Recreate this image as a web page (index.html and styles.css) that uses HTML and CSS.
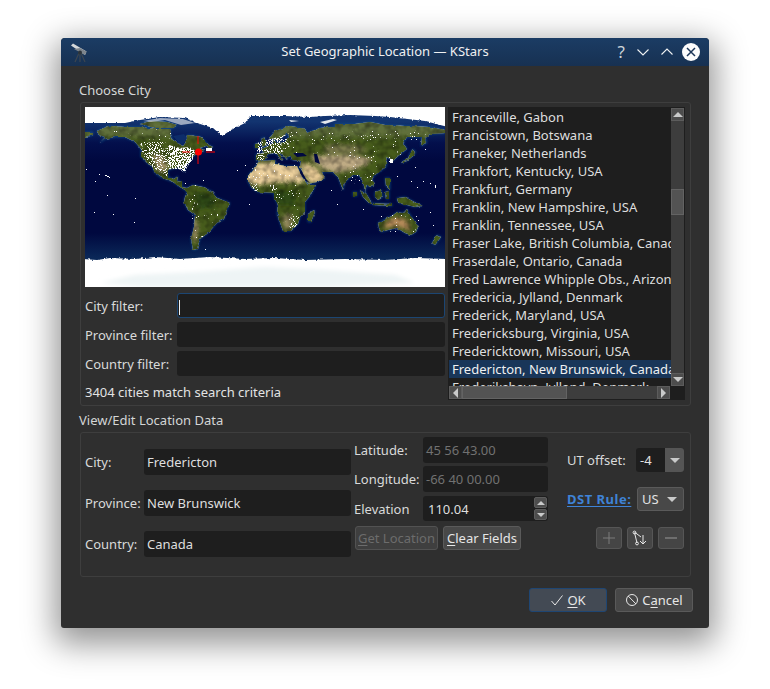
FILE: index.html
```html
<!DOCTYPE html>
<html lang="en">
<head>
<meta charset="utf-8">
<title>Set Geographic Location — KStars</title>
<link rel="stylesheet" href="styles.css">
</head>
<body>
<div class="window">
  <header class="titlebar">
    <svg class="app-icon" viewBox="0 0 18 20" width="18" height="20">
      <path d="M9 10 L5 19 M10 10 L10 19 M11 10 L15 19" stroke="#3c4650" stroke-width="1.2" fill="none"/>
      <path d="M1 2.5 L3 0.5 L16.5 8.5 L15 12 Z" fill="#d5d8da"/>
      <path d="M4 6 L15 12 L16.5 8.5 L10 5 Z" fill="#7d858c"/>
      <circle cx="10" cy="9.5" r="2" fill="#2d343a"/>
    </svg>
    <div class="title">Set Geographic Location — KStars</div>
    <div class="controls">
      <span class="help">?</span>
      <svg viewBox="0 0 14 14" width="14" height="14"><path d="M1.5 4.5 L7 10 L12.5 4.5" fill="none" stroke="#f0f2f3" stroke-width="1.1"/></svg>
      <svg viewBox="0 0 14 14" width="14" height="14"><path d="M1.5 9.5 L7 4 L12.5 9.5" fill="none" stroke="#f0f2f3" stroke-width="1.1"/></svg>
      <svg class="close" viewBox="0 0 18 18" width="18" height="18"><circle cx="9" cy="9" r="9" fill="#fcfcfc"/><path d="M5 5 L13 13 M13 5 L5 13" stroke="#1b3557" stroke-width="1.5"/></svg>
    </div>
  </header>

  <main class="content">
    <div class="section-label">Choose City</div>
    <section class="group group-city">
      <div class="city-left">
        <svg class="map" viewBox="0 0 360 180" width="360" height="180">
          <defs>
            <linearGradient id="sea" x1="0" y1="0" x2="0" y2="1">
              <stop offset="0.08" stop-color="#123470"/>
              <stop offset="0.2" stop-color="#030f4c"/>
              <stop offset="0.3" stop-color="#00083f"/>
              <stop offset="0.7" stop-color="#00083f"/>
              <stop offset="0.84" stop-color="#0a2858"/>
            </linearGradient>
            <filter id="glow"><feGaussianBlur stdDeviation="1"/></filter>
            <filter id="soft" x="-20%" y="-20%" width="140%" height="140%"><feGaussianBlur stdDeviation="2"/></filter>
            <filter id="rough" x="-2%" y="-2%" width="104%" height="104%" color-interpolation-filters="sRGB">
              <feTurbulence type="fractalNoise" baseFrequency="0.18" numOctaves="3" seed="7" result="n"/>
              <feDisplacementMap in="SourceGraphic" in2="n" scale="3" xChannelSelector="R" yChannelSelector="G" result="d"/>
              <feTurbulence type="fractalNoise" baseFrequency="0.14" numOctaves="2" seed="11"/>
              <feColorMatrix values="0.8 0 0 0 0.5  0.8 0 0 0 0.5  0.8 0 0 0 0.5  0 0 0 0 1" result="g"/>
              <feBlend in="d" in2="g" mode="multiply" result="b"/>
              <feComposite in="b" in2="d" operator="in"/>
            </filter>
            <filter id="ragged" x="-2%" y="-5%" width="104%" height="110%" color-interpolation-filters="sRGB">
              <feTurbulence type="fractalNoise" baseFrequency="0.3" numOctaves="2" seed="4" result="n"/>
              <feDisplacementMap in="SourceGraphic" in2="n" scale="3" xChannelSelector="R" yChannelSelector="G"/>
            </filter>
            <filter id="c10" x="0" y="0" width="100%" height="100%" color-interpolation-filters="sRGB">
              <feTurbulence type="fractalNoise" baseFrequency="0.95" numOctaves="1" seed="5"/>
              <feColorMatrix values="0 0 0 0 1  0 0 0 0 1  0 0 0 0 1  40 0 0 0 -28"/>
              <feComposite in2="SourceGraphic" operator="in"/>
            </filter>
            <filter id="c25" x="0" y="0" width="100%" height="100%" color-interpolation-filters="sRGB">
              <feTurbulence type="fractalNoise" baseFrequency="0.95" numOctaves="1" seed="9"/>
              <feColorMatrix values="0 0 0 0 1  0 0 0 0 1  0 0 0 0 1  40 0 0 0 -25"/>
              <feComposite in2="SourceGraphic" operator="in"/>
            </filter>
            <filter id="c50" x="0" y="0" width="100%" height="100%" color-interpolation-filters="sRGB">
              <feTurbulence type="fractalNoise" baseFrequency="0.95" numOctaves="1" seed="2"/>
              <feColorMatrix values="0 0 0 0 1  0 0 0 0 1  0 0 0 0 1  40 0 0 0 -21.5"/>
              <feComposite in2="SourceGraphic" operator="in"/>
            </filter>
            <filter id="c80" x="0" y="0" width="100%" height="100%" color-interpolation-filters="sRGB">
              <feTurbulence type="fractalNoise" baseFrequency="0.95" numOctaves="1" seed="14"/>
              <feColorMatrix values="0 0 0 0 1  0 0 0 0 1  0 0 0 0 1  40 0 0 0 -18.5"/>
              <feComposite in2="SourceGraphic" operator="in"/>
            </filter>
            <path id="land-shape" d="M12 24L24 19L40 20L55 20L70 22L85 22L86 28L88 33L94 37L98 39L101 35L102 28L110 29L116 30L124 38L115 41L120 44L114 46L110 48L105 52L104 55L99 59L100 65L98 62L96 60L90 61L83 63L83 70L89 72L93 69L92 74L97 75L97 80L102 81L100 83L95 80L88 75L75 70L70 66L67 59L63 57L56 50L56 42L50 35L40 30L30 30L20 32L15 36L20 30L14 28Z M55 17L66 14L82 15L92 18L88 21L70 21Z M100 82L102 81L108 78L118 80L128 85L130 90L145 96L141 105L139 112L132 116L123 126L115 132L112 142L108 143L106 132L109 120L110 108L103 103L99 95L100 90L102 86Z M163 75L163 69L170 60L174 54L190 53L191 57L200 59L212 59L217 70L223 78L231 78L225 89L220 95L220 105L215 110L213 117L206 124L198 124L192 107L193 98L189 90L189 86L173 85L167 81Z M171 53L171 47L179 46L176 42L183 39L188 36L188 33L191 36L200 35L203 30L202 25L198 30L193 34L185 31L190 24L205 19L220 22L222 26L235 21L250 20L250 17L270 17L285 15L300 18L320 19L345 20L360 23L360 26L345 27L340 30L342 36L336 39L337 30L322 30L318 36L322 42L312 50L308 54L306 52L300 50L302 56L301 60L290 68L287 72L289 78L285 80L282 78L280 85L284 91L282 91L278 75L274 68L268 68L260 75L258 83L253 70L247 65L237 65L239 70L240 71L232 75L223 77L219 68L215 60L216 54L207 53L206 49L203 50L202 53L199 49L193 46L198 53L196 52L190 46L183 47L180 52L174 54Z M0 25L8 25L8 28L0 30Z M170 37L174 36L174 41L170 41Z M176 32L179 30L182 38L177 40Z M293 116L300 112L307 109L312 105L318 106L322 102L324 106L328 112L333 120L331 125L326 128L320 126L312 121L303 123L296 125L294 121Z M275 83L282 88L287 96L284 96L278 90Z M287 96L307 97L307 99L288 98Z M290 85L296 83L298 90L293 93L290 90Z M300 85L304 84L304 92L301 92Z M312 91L320 90L337 99L330 100L318 97L313 95Z M300 71L305 71L305 83L301 79Z M323 52L325 46L328 42L331 45L328 49L322 54L316 56L318 54Z M223 107L229 103L230 105L226 115L223 115Z M352 128L356 130L350 138L347 136Z M120 36L128 40L124 42Z M268 85H272V89H268Z"/>
            <clipPath id="land-clip"><use href="#land-shape"/></clipPath>
          </defs>
          <rect width="360" height="180" fill="url(#sea)"/>

          <use href="#land-shape" fill="#1a6a9c" stroke="#1a6a9c" stroke-width="1" filter="url(#glow)" opacity=".5"/>

          <g filter="url(#rough)">
            <use href="#land-shape" fill="#465b1b"/>
            <g clip-path="url(#land-clip)">
              <g filter="url(#soft)">
                <rect x="0" y="14" width="360" height="16" fill="#61703a"/>
                <path d="M160 68L172 56L192 55L212 58L220 68L218 76L205 75L190 76L175 78L162 76Z" fill="#ecd09c"/>
                <path d="M215 56L228 58L240 70L234 76L224 76Z" fill="#e8ca94"/>
                <path d="M224 49L250 48L270 48L288 52L280 58L272 62L250 66L237 62Z" fill="#bfab84"/>
                <path d="M240 38L270 38L285 43L265 46L240 46Z" fill="#7f7d50"/>
                <path d="M298 121L302 114L312 110L320 112L325 119L325 124L312 119L304 121Z" fill="#b68a5a"/>
                <path d="M66 48L78 48L84 62L74 66Z" fill="#9d8f68"/>
                <path d="M107 108L113 118L112 134L108 135Z" fill="#9f8c68"/>
                <path d="M197 108L208 108L206 122L199 122Z" fill="#958a5e"/>
                <path d="M110 85L128 88L130 100L112 102Z" fill="#2e4a16"/>
                <path d="M188 84L210 84L210 98L192 98Z" fill="#2e4a16"/>
              </g>
            </g>
          </g>

          <g fill="#00083f">
            <path d="M208 46L218 46L222 49L212 50Z"/>
            <path d="M229 47L232 47L235 57L230 55Z"/>
            <path d="M216 63L221 72L225 76L221 74L215 66Z"/>
          </g>
          <path d="M88 29L99 27L102 31L99 36L97 38L93 35Z" fill="#0d2d6a"/>

          <g filter="url(#ragged)">
            <path d="M-3 -3H363V20L340 14L305 10L290 9L265 8L240 9L225 10L200 9L165 9L160 16L146 23L137 29L128 21L115 17L100 11L75 10L55 13L40 16L-3 16Z" fill="#fff"/>
            <path d="M-3 152L12 153L25 151L50 152L70 150L95 152L125 150L160 152L190 151L220 153L260 152L300 153L330 151L363 152V183H-3Z" fill="#fff"/>
          </g>
          <path d="M58 14L75 11L98 12L110 16L96 18L80 13L66 15Z" fill="#d7dce2" opacity=".7"/>
          <path d="M204 13L214 14L206 15ZM235 15L248 12L252 13L240 17Z" fill="#e4e8ec"/>
          <path d="M15 176L50 168L110 165L180 160L240 163L310 168L330 176L240 180H60Z" fill="#eef4f5" filter="url(#soft)"/>

          <path d="M55 35L80 35L84 40L84 62L82 70L78 66L70 62L62 55L57 45Z" fill="#fff" filter="url(#c50)"/>
          <path d="M84 38L95 41L105 40L110 44L108 52L102 60L100 66L94 62L84 62Z" fill="#fff" filter="url(#c80)"/>
          <path d="M172 36L200 28L205 40L194 47L184 46L178 45L172 47Z" fill="#fff" filter="url(#c50)"/>
          <path d="M172 47L181 46L178 53L171 53Z" fill="#fff" filter="url(#c50)"/>
          <path d="M15 22L50 20L85 24L90 36L55 34L45 28Z" fill="#fff" filter="url(#c10)"/>
          <path d="M200 22L345 24L330 40L300 56L250 48L205 46Z" fill="#fff" filter="url(#c10)"/>
          <path d="M164 74L190 78L212 78L222 84L216 104L212 120L203 124L196 106L190 88L170 84Z" fill="#fff" filter="url(#c10)"/>
          <path d="M164 76L190 78L190 84L170 84Z" fill="#fff" filter="url(#c25)"/>
          <path d="M164 54L212 58L212 76L164 74Z" fill="#fff" filter="url(#c10)"/>
          <path d="M200 112L214 104L212 118L204 124Z" fill="#fff" filter="url(#c25)"/>
          <path d="M250 58L300 52L285 78L258 78Z" fill="#fff" filter="url(#c10)"/>
          <path d="M102 84L140 96L124 125L112 138Z" fill="#fff" filter="url(#c10)"/>
          <path d="M296 108L332 108L330 128L296 124Z" fill="#fff" filter="url(#c10)"/>
          <path d="M1 62h1v1h-1zM14 67h1v1h-1zM10 74h1v1h-1zM20 68h2v1h-2zM22 69h2v1h-2zM24 70h1v1h-1zM22 88h1v1h-1zM9 105h1v1h-1zM28 107h1v1h-1zM50 91h1v1h-1zM49 115h1v1h-1zM120 142h1v1h-1zM110 78h1v1h-1zM100 76h1v1h-1zM118 73h1v1h-1zM164 97h1v1h-1zM152 63h1v1h-1zM160 58h1v1h-1zM246 83h1v1h-1zM252 97h1v1h-1zM278 102h1v1h-1zM282 70h1v1h-1zM312 69h1v1h-1zM326 74h1v1h-1zM332 80h1v1h-1zM345 76h1v1h-1zM350 78h1v3h-1zM338 74h1v1h-1zM345 105h1v1h-1zM333 113h1v1h-1zM348 118h1v1h-1zM305 52h3v4h-3zM304 54h1v1h-1zM340 42h1v1h-1zM330 60h1v1h-1zM121 41h6v3h-6z" fill="#fff"/>

          <path d="M113 29V37M113 48V57M97 45H105M121 45H130" stroke="#f00" stroke-width="1" fill="none"/>
          <circle cx="113.5" cy="45" r="3.5" fill="#f00"/>
        </svg>
        <div class="filters">
          <label class="field-label">City filter:</label>
          <div class="input input-focus"><span class="caret"></span></div>
          <label class="field-label">Province filter:</label>
          <div class="input"></div>
          <label class="field-label">Country filter:</label>
          <div class="input"></div>
        </div>
        <div class="match">3404 cities match search criteria</div>
      </div>

      <div class="listbox">
        <div class="list-view">
          <div class="row">Franceville, Gabon</div>
          <div class="row">Francistown, Botswana</div>
          <div class="row">Franeker, Netherlands</div>
          <div class="row">Frankfort, Kentucky, USA</div>
          <div class="row">Frankfurt, Germany</div>
          <div class="row">Franklin, New Hampshire, USA</div>
          <div class="row">Franklin, Tennessee, USA</div>
          <div class="row">Fraser Lake, British Columbia, Canada</div>
          <div class="row">Fraserdale, Ontario, Canada</div>
          <div class="row">Fred Lawrence Whipple Obs., Arizona, USA</div>
          <div class="row">Fredericia, Jylland, Denmark</div>
          <div class="row">Frederick, Maryland, USA</div>
          <div class="row">Fredericksburg, Virginia, USA</div>
          <div class="row">Fredericktown, Missouri, USA</div>
          <div class="row row-selected">Fredericton, New Brunswick, Canada</div>
          <div class="row">Frederikshavn, Jylland, Denmark</div>
        </div>
        <div class="vscroll">
          <div class="sb-btn"><span class="tri tri-up"></span></div>
          <div class="vtrack"><div class="vthumb"></div></div>
          <div class="sb-btn"><span class="tri tri-down"></span></div>
        </div>
        <div class="hscroll">
          <div class="sb-btn"><span class="tri tri-left"></span></div>
          <div class="htrack"><div class="hthumb"></div></div>
          <div class="sb-btn"><span class="tri tri-right"></span></div>
        </div>
      </div>
    </section>

    <div class="section-label section-label-second">View/Edit Location Data</div>
    <section class="group group-edit">
      <div class="col-place">
        <label class="field-label">City:</label>
        <div class="input input-text">Fredericton</div>
        <label class="field-label">Province:</label>
        <div class="input input-text">New Brunswick</div>
        <label class="field-label">Country:</label>
        <div class="input input-text">Canada</div>
      </div>
      <div class="col-coords">
        <div class="coord-row">
          <label class="field-label coord-label">Latitude:</label>
          <div class="input input-text input-disabled coord-input">45 56 43.00</div>
        </div>
        <div class="coord-row">
          <label class="field-label coord-label">Longitude:</label>
          <div class="input input-text input-disabled coord-input">-66 40 00.00</div>
        </div>
        <div class="coord-row coord-row-elev">
          <label class="field-label coord-label">Elevation</label>
          <div class="input input-text coord-input elev-input">
            <span class="elev-value">110.04</span>
            <span class="spin"><span class="spin-btn"><span class="tri tri-up"></span></span><span class="spin-btn"><span class="tri tri-down"></span></span></span>
          </div>
        </div>
        <div class="coord-buttons">
          <button class="btn btn-disabled btn-get"><u>G</u>et Location</button>
          <button class="btn btn-clear"><u>C</u>lear Fields</button>
        </div>
      </div>
      <div class="col-rules">
        <div class="rule-row">
          <label class="field-label">UT offset:</label>
          <div class="ut-combo"><span class="ut-value">-4</span><span class="ut-arrow"><span class="tri tri-down"></span></span></div>
        </div>
        <div class="rule-row rule-row-dst">
          <a class="dst-link">DST Rule:</a>
          <div class="dst-combo"><span>US</span><span class="tri tri-down"></span></div>
        </div>
        <div class="icon-buttons">
          <button class="icon-btn"><svg viewBox="0 0 14 14" width="14" height="14"><path d="M7 1V13M1 7H13" stroke="#7d7d7d" stroke-width="1" fill="none"/></svg></button>
          <button class="icon-btn"><svg viewBox="0 0 16 16" width="16" height="16"><path d="M2.5 2.5L5 13M3 2.5L9 7" stroke="#e8e8e8" stroke-width="1" fill="none"/><circle cx="2.5" cy="2.5" r="1.4" fill="none" stroke="#e8e8e8"/><circle cx="5" cy="13.5" r="1.4" fill="none" stroke="#e8e8e8"/><path d="M11 5V14M8 11L11 14L14 11" stroke="#e8e8e8" stroke-width="1" fill="none"/></svg></button>
          <button class="icon-btn"><svg viewBox="0 0 14 14" width="14" height="14"><path d="M1 7H13" stroke="#8a8a8a" stroke-width="1.2" fill="none"/></svg></button>
        </div>
      </div>
    </section>

    <div class="dialog-buttons">
      <button class="btn dlg-btn dlg-ok"><svg viewBox="0 0 14 14" width="14" height="14"><path d="M1.5 8L5 12L12.5 2.5" fill="none" stroke="#e8e8e8" stroke-width="1"/></svg><span><u>O</u>K</span></button>
      <button class="btn dlg-btn"><svg viewBox="0 0 14 14" width="14" height="14"><circle cx="7" cy="7" r="5.5" fill="none" stroke="#e8e8e8" stroke-width="1"/><path d="M3.2 3L11 11" stroke="#e8e8e8" stroke-width="1"/></svg><span>C<u>a</u>ncel</span></button>
    </div>
  </main>
</div>
</body>
</html>
```

FILE: styles.css
```css
* { box-sizing: border-box; }

html, body {
  margin: 0;
  background: #fff;
}

body {
  height: 689px;
  overflow: hidden;
  padding: 38px 61px 0;
  font-family: "Noto Sans", sans-serif;
  font-size: 13px;
  line-height: 18px;
  color: #e2e3e3;
}

.window {
  width: 648px;
  height: 590px;
  background: #2f2f2f;
  border-radius: 4px 4px 3px 3px;
  box-shadow: 0 10px 32px 6px rgba(0, 0, 0, 0.42);
}

.titlebar {
  height: 28px;
  display: grid;
  grid-template-columns: 1fr auto 1fr;
  align-items: center;
  padding: 0 9px;
  background: linear-gradient(#1b3c64, #173152);
  border-radius: 4px 4px 0 0;
  color: #eff0f1;
}

.app-icon { margin-top: 2px; }

.title {
  text-align: center;
  margin-top: -2px;
}

.controls {
  display: flex;
  align-items: center;
  justify-content: flex-end;
  gap: 10px;
}

.close { margin-left: -2px; }

.help {
  font-size: 17px;
  color: #cdd3d9;
  margin-right: 1px;
}

.content { padding: 15px 16px 0 18px; }

.section-label {
  height: 18px;
  margin-bottom: 3px;
  color: #d4d6d6;
}

.section-label-second { margin-top: 5px; }

.group {
  width: 611px;
  margin-left: 1px;
  border: 1px solid #3e3e3e;
  border-radius: 3px;
}

.group-city {
  height: 304px;
  display: flex;
  gap: 3px;
  padding: 4px 5px 0 4px;
}

.city-left {
  width: 360px;
  flex: none;
}

.map {
  display: block;
}

.filters {
  display: grid;
  grid-template-columns: 92px 268px;
  grid-auto-rows: 25px;
  row-gap: 4px;
  align-items: center;
  margin-top: 6px;
}

.field-label {
  color: #d9dada;
  white-space: nowrap;
}

.input {
  height: 100%;
  background: #1e1e1e;
  border-radius: 3px;
}

.input-focus {
  border: 1px solid #1c4673;
  padding: 6px 0 0 1px;
}

.caret {
  display: block;
  width: 1px;
  height: 15px;
  background: #eff0f1;
}

.match { margin-top: 7px; }

.listbox {
  position: relative;
  width: 237px;
  height: 293px;
  background: #1e1e1e;
  overflow: hidden;
}

.list-view {
  width: 222px;
  height: 278px;
  margin: 1px 0 0 1px;
  overflow: hidden;
}

.row {
  height: 18px;
  padding-left: 3px;
  white-space: nowrap;
  overflow: hidden;
  color: #dedfdf;
}

.row-selected {
  background: #193659;
  color: #eff0f1;
}

.vscroll {
  position: absolute;
  top: 1px;
  right: 1px;
  width: 13px;
  height: 278px;
  display: flex;
  flex-direction: column;
}

.hscroll {
  position: absolute;
  left: 1px;
  bottom: 1px;
  width: 221px;
  height: 13px;
  display: flex;
}

.sb-btn {
  flex: none;
  width: 13px;
  height: 13px;
  display: flex;
  align-items: center;
  justify-content: center;
  background: #4d4d4d;
  border: 1px solid #5c5c5c;
}

.vtrack {
  flex: 1;
  background: #3d3d3d;
  padding-top: 68px;
}

.vthumb {
  height: 26px;
  background: #535353;
  border: 1px solid #636363;
}

.htrack {
  flex: 1;
  background: #3d3d3d;
}

.hthumb {
  width: 105px;
  height: 13px;
  background: #535353;
  border: 1px solid #636363;
}

.tri {
  display: block;
  width: 0;
  height: 0;
  border-style: solid;
  border-color: transparent;
}

.tri-up {
  border-width: 0 5px 5px;
  border-bottom-color: #c9caca;
}

.tri-down {
  border-width: 5px 5px 0;
  border-top-color: #c9caca;
}

.tri-left {
  border-width: 5px 5px 5px 0;
  border-right-color: #c9caca;
}

.tri-right {
  border-width: 5px 0 5px 5px;
  border-left-color: #c9caca;
}

.group-edit {
  height: 145px;
  display: flex;
  padding: 4px 5px 0 4px;
}

.col-place {
  width: 266px;
  flex: none;
  display: grid;
  grid-template-columns: 59px 207px;
  grid-auto-rows: 26px;
  row-gap: 15px;
  align-items: center;
  align-content: start;
  margin-top: 12px;
}

.input-text {
  display: flex;
  align-items: center;
  padding-left: 3px;
  color: #dedfdf;
}

.input-disabled { color: #717171; }

.col-coords {
  width: 194px;
  flex: none;
  margin-left: 3px;
}

.coord-row {
  display: flex;
  align-items: center;
  height: 26px;
  margin-bottom: 3px;
}

.coord-row-elev {
  height: 25px;
  margin-top: 4px;
  margin-bottom: 5px;
}

.coord-label { width: 69px; flex: none; }

.coord-input { width: 125px; flex: none; }

.elev-input {
  justify-content: space-between;
  padding: 1px 1px 1px 5px;
}

.spin {
  display: flex;
  flex-direction: column;
  gap: 1px;
  width: 13px;
  height: 23px;
}

.spin-btn {
  flex: 1;
  display: flex;
  align-items: center;
  justify-content: center;
  background: #4d4d4d;
  border: 1px solid #5c5c5c;
  border-radius: 2px;
}

.spin .tri-up { border-width: 0 4px 4px; }
.spin .tri-down { border-width: 4px 4px 0; }

.coord-buttons {
  display: flex;
  gap: 5px;
  margin-left: 1px;
}

.btn {
  height: 24px;
  padding: 0;
  font: inherit;
  line-height: 18px;
  color: #e6e6e6;
  background: #484848;
  border: 1px solid #5a5a5a;
  border-radius: 3px;
}

u { text-underline-offset: 2px; }

.btn-get { width: 83px; }
.btn-clear { width: 78px; }

.btn-disabled {
  color: #6c6c6c;
  background: #3f3f3f;
  border-color: #525252;
}

.col-rules {
  width: 117px;
  flex: none;
  margin-left: 19px;
  margin-top: 11px;
}

.rule-row {
  display: flex;
  align-items: center;
  justify-content: space-between;
  height: 24px;
  margin-bottom: 15px;
}

.rule-row-dst { margin-bottom: 16px; }

.ut-combo {
  width: 48px;
  height: 24px;
  display: flex;
  background: #1e1e1e;
  border-radius: 3px;
  overflow: hidden;
}

.ut-value {
  flex: 1;
  padding-left: 4px;
  line-height: 24px;
}

.ut-arrow {
  width: 19px;
  display: flex;
  align-items: center;
  justify-content: center;
  background: #555;
}

.dst-link {
  font-weight: 700;
  color: #3f83d6;
  letter-spacing: 0.5px;
  text-decoration: underline;
  text-underline-offset: 2px;
}

.dst-combo {
  width: 47px;
  height: 24px;
  display: flex;
  align-items: center;
  justify-content: space-between;
  padding: 0 6px 0 4px;
  background: #484848;
  border: 1px solid #5a5a5a;
  border-radius: 3px;
}

.icon-buttons {
  display: flex;
  justify-content: flex-end;
  gap: 5px;
}

.icon-btn {
  width: 26px;
  height: 22px;
  padding: 0;
  display: flex;
  align-items: center;
  justify-content: center;
  background: #454545;
  border: 1px solid #565656;
  border-radius: 3px;
}

.dialog-buttons {
  display: flex;
  justify-content: flex-end;
  gap: 8px;
  margin-top: 11px;
}

.dlg-btn {
  width: 78px;
  display: flex;
  align-items: center;
  justify-content: center;
  gap: 3px;
}

.dlg-ok {
  background: #434a54;
  border-color: #1f4673;
}
```
